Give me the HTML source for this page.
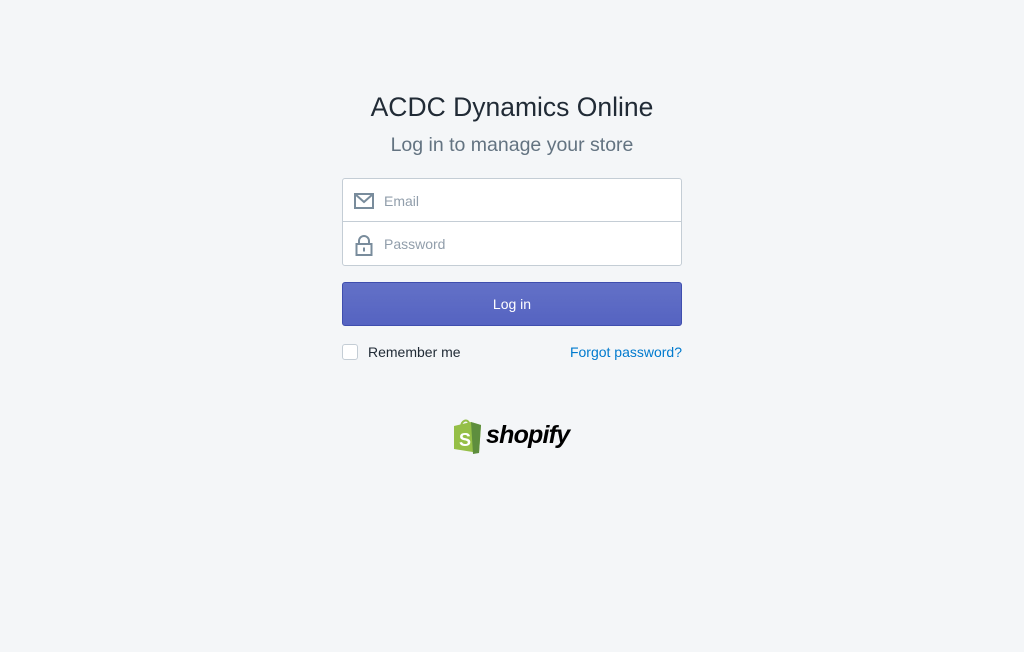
<!DOCTYPE html>
<html><head><meta charset="utf-8"><style>
html,body{margin:0;padding:0;background:#f4f6f8;width:1024px;height:652px;overflow:hidden;font-family:"Liberation Sans",sans-serif}
.t{position:absolute;left:0;width:1024px;text-align:center}
h1{margin:0;font-weight:400;font-size:26.5px;color:#212b36;top:92px}
h2{margin:0;font-weight:400;font-size:19.5px;color:#637381;top:134px}
.box{position:absolute;left:342px;top:178px;width:338px;height:86px;border:1px solid #c4cdd5;border-radius:3px;background:#fff}
.sep{position:absolute;left:0;right:0;top:42px;border-top:1px solid #c4cdd5}
.ph{position:absolute;left:41px;font-size:14px;color:#919eab}
.btn{position:absolute;left:342px;top:282px;width:340px;height:44px;border-radius:3px;background:linear-gradient(#6371c7,#5563c1);border:1px solid #3f4eae;box-sizing:border-box;color:#fff;font-size:14px;text-align:center;line-height:42px}
.cb{position:absolute;left:342px;top:344px;width:14px;height:14px;border:1px solid #c4cdd5;border-radius:3px;background:#fff}
</style></head><body>
<h1 class="t">ACDC Dynamics Online</h1>
<h2 class="t">Log in to manage your store</h2>
<div class="box">
<svg style="position:absolute;left:11px;top:14px" width="20" height="16" viewBox="0 0 20 16"><rect x="1" y="1" width="18" height="14" fill="none" stroke="#798c9c" stroke-width="2"/><path d="M1 1L10 9L19 1" fill="none" stroke="#798c9c" stroke-width="2"/></svg>
<span class="ph" style="top:14px">Email</span>
<div class="sep"></div>
<svg style="position:absolute;left:12px;top:56px" width="18" height="21" viewBox="0 0 18 21"><path d="M4 9V6a5 5 0 0 1 10 0v3" fill="none" stroke="#798c9c" stroke-width="2"/><rect x="1.5" y="9" width="15" height="11" fill="none" stroke="#798c9c" stroke-width="2"/><rect x="8" y="12.5" width="2" height="4" fill="#798c9c"/></svg>
<span class="ph" style="top:57px">Password</span>
</div>
<div class="btn">Log in</div>
<div class="cb"></div>
<span style="position:absolute;left:368px;top:344px;font-size:14px;color:#212b36">Remember me</span>
<span style="position:absolute;right:342px;top:344px;font-size:14px;color:#007ace">Forgot password?</span>
<svg style="position:absolute;left:451px;top:418px" width="34" height="36" viewBox="0 0 34 36"><path d="M3 8L20 4L30 7L28 35L3 31Z" fill="#95bf47"/><path d="M20 4L30 7L28 35L22 36Z" fill="#5e8e3e"/><path d="M10 9C10 3 16 0 18 5" fill="none" stroke="#95bf47" stroke-width="2"/><text x="8" y="28" font-family="Liberation Sans" font-weight="bold" font-size="18" fill="#fff">S</text></svg>
<span style="position:absolute;left:486px;top:421px;font-size:25px;font-weight:bold;font-style:italic;color:#000;letter-spacing:-0.8px">shopify</span>
</body></html>
